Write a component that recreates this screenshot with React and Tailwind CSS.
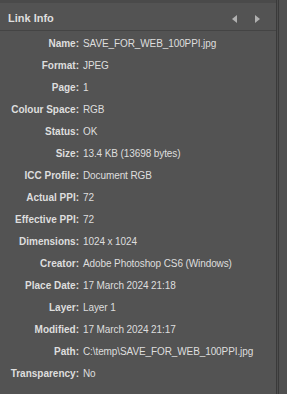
const rows = [
  ["Name:", "SAVE_FOR_WEB_100PPI.jpg"],
  ["Format:", "JPEG"],
  ["Page:", "1"],
  ["Colour Space:", "RGB"],
  ["Status:", "OK"],
  ["Size:", "13.4 KB (13698 bytes)"],
  ["ICC Profile:", "Document RGB"],
  ["Actual PPI:", "72"],
  ["Effective PPI:", "72"],
  ["Dimensions:", "1024 x 1024"],
  ["Creator:", "Adobe Photoshop CS6 (Windows)"],
  ["Place Date:", "17 March 2024 21:18"],
  ["Layer:", "Layer 1"],
  ["Modified:", "17 March 2024 21:17"],
  ["Path:", "C:\\temp\\SAVE_FOR_WEB_100PPI.jpg"],
  ["Transparency:", "No"],
];

export default function App() {
  return (
    <div className="w-[287px] h-[394px] flex bg-[#535353] overflow-hidden font-['Liberation_Sans',Arial,sans-serif] text-[#dedede]">
      {/* Panel */}
      <div className="w-[276px] flex flex-col">
        <div className="h-[3px] bg-[#4a4a4a]" />
        {/* Header */}
        <div className="h-[28px] flex items-center justify-between pl-2 pr-[16px] border-b border-[#444]">
          <span className="text-[11px] font-bold pt-[4px]">Link Info</span>
          <div className="flex items-center gap-[18px] pt-[4px]">
            <svg width="5" height="8" viewBox="0 0 5 8">
              <path d="M5 0 L0 4 L5 8 Z" fill="#b0b0b0" />
            </svg>
            <svg width="5" height="8" viewBox="0 0 5 8">
              <path d="M0 0 L5 4 L0 8 Z" fill="#b0b0b0" />
            </svg>
          </div>
        </div>

        {/* Rows */}
        <div className="grid grid-cols-[79px_1fr] gap-x-[4px] pt-[2px] text-[10px] leading-[22px]">
          {rows.map(([label, value]) => (
            <div key={label} className="contents">
              <span className="text-right font-bold whitespace-nowrap">{label}</span>
              <span className="whitespace-nowrap tracking-[-0.1px]">{value}</span>
            </div>
          ))}
        </div>
      </div>

      {/* Right edge */}
      <div className="w-px bg-[#3a3a3a]" />
      <div className="w-px bg-[#4e4e4e]" />
      <div className="w-px bg-[#3a3a3a]" />
      <div className="flex-1 bg-[#505050]" />
    </div>
  );
}
